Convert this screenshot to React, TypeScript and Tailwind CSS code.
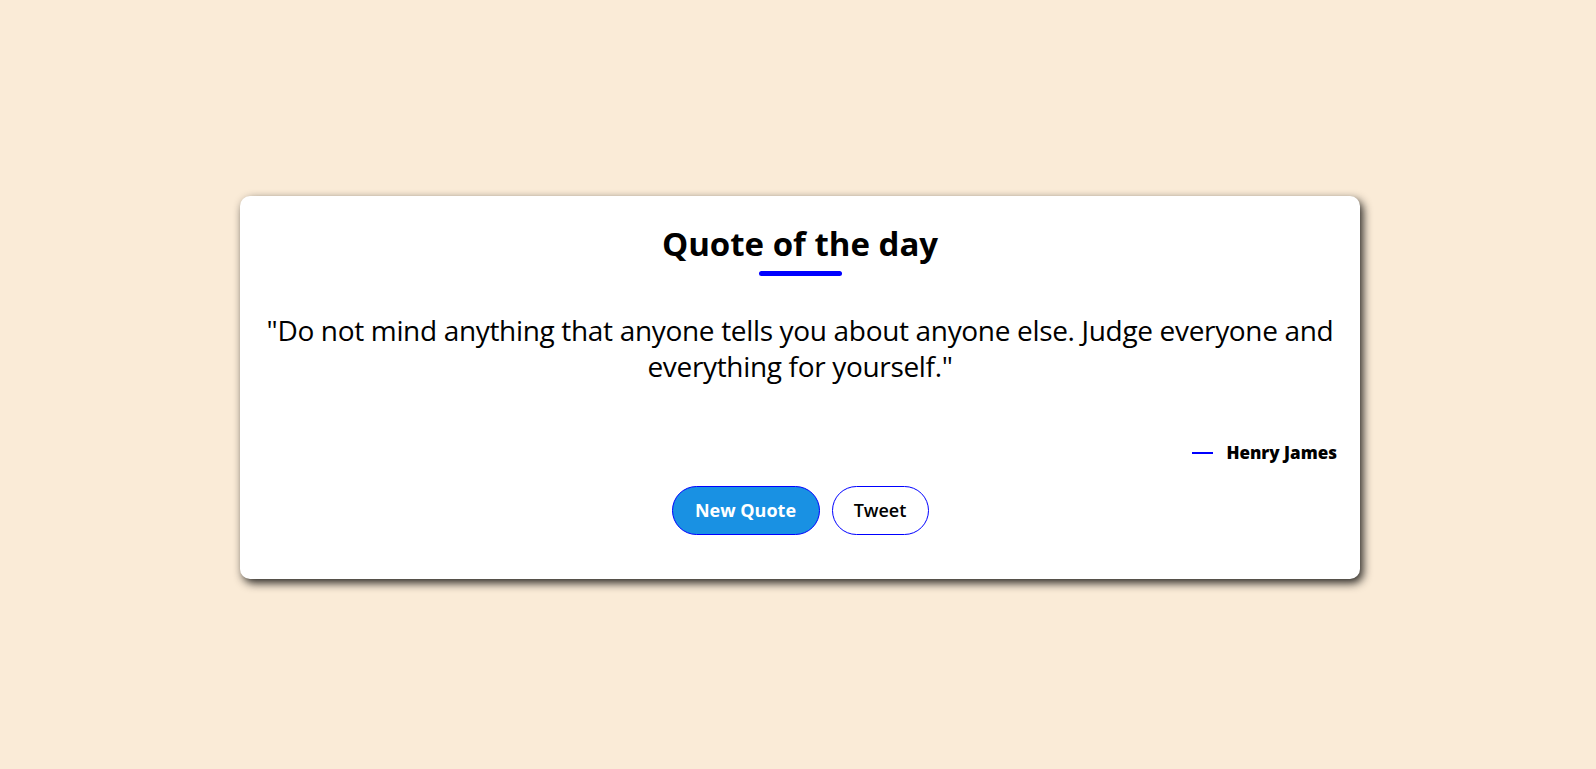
import { useState } from "react";

const quotes = [
  {
    text: "Do not mind anything that anyone tells you about anyone else. Judge everyone and everything for yourself.",
    author: "Henry James",
  },
];

function QuoteCard() {
  const [index, setIndex] = useState(0);
  const quote = quotes[index];

  const handleNewQuote = () => {
    setIndex((index + 1) % quotes.length);
  };

  return (
    <div className="w-[1120px] bg-white rounded-[10px] shadow-[3px_4px_10px_rgba(0,0,0,0.85)] pt-[28px] pb-[44px] px-[23px] flex flex-col">
      <h1 className="text-[33px] leading-[40px] font-bold text-black text-center">
        Quote of the day
      </h1>
      <div className="mx-auto mt-[7px] w-[83px] h-[5px] rounded-full bg-[#0000ff]" />

      <p className="mt-[36px] text-[28px] leading-[36px] text-black text-center tracking-[-0.33px]">
        "{quote.text}"
      </p>

      <div className="mt-[57px] flex items-center justify-end gap-[13px]">
        <span className="w-[21px] h-[1.5px] bg-[#0000ff]" />
        <span className="text-[17px] leading-[24px] font-extrabold text-black">
          {quote.author}
        </span>
      </div>

      <div className="mt-[21px] flex justify-center gap-[12px]">
        <button
          onClick={handleNewQuote}
          className="w-[148px] h-[49px] rounded-full bg-[#1991e3] border border-[#0000ff] text-white text-[18px] font-bold"
        >
          New Quote
        </button>
        <button className="w-[97px] h-[49px] rounded-full bg-white border border-[#0000ff] text-black text-[18px] font-semibold">
          Tweet
        </button>
      </div>
    </div>
  );
}

export default function App() {
  return (
    <div
      className="min-h-screen w-full bg-[#faebd7] flex items-center justify-center pt-[6px] pl-[4px]"
      style={{ fontFamily: '"Open Sans", "Noto Sans", sans-serif' }}
    >
      <QuoteCard />
    </div>
  );
}
